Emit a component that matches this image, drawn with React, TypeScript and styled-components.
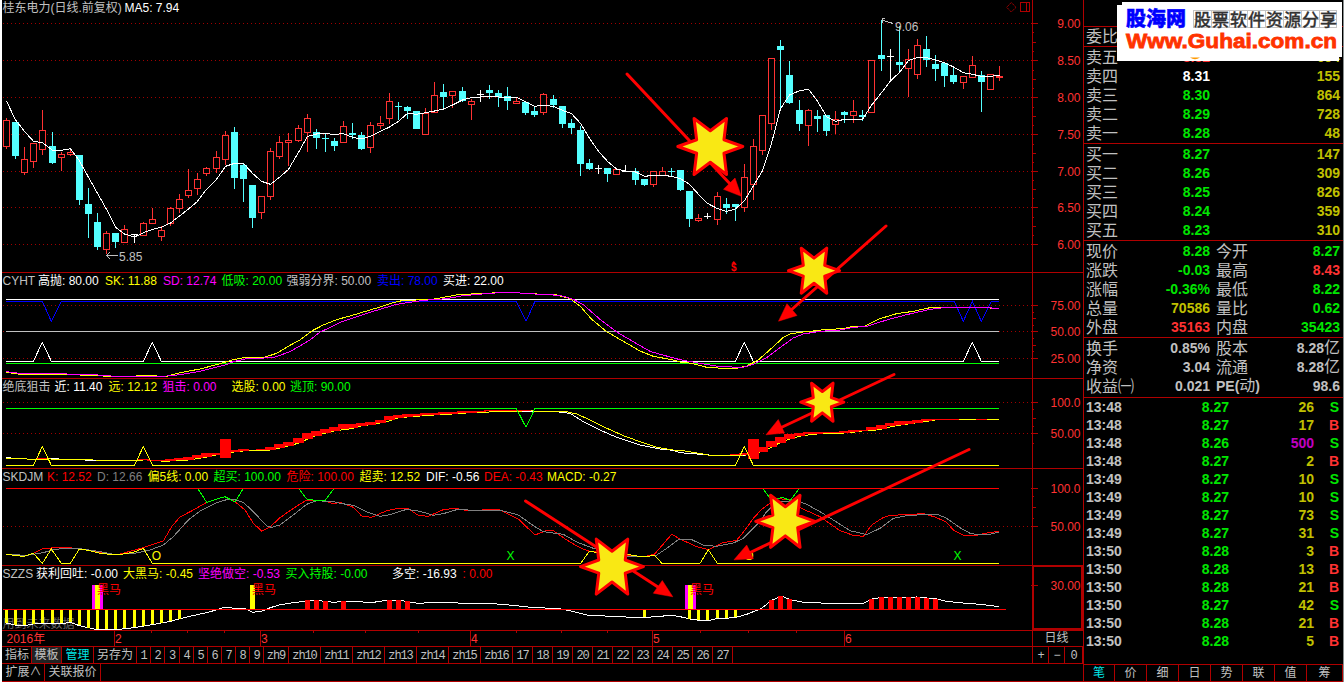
import React from 'react';
import styled, { createGlobalStyle } from 'styled-components';

const RED = '#b00000';
const UP = '#ff3232';
const DOWN = '#54ffff';
const GRAY = '#c0c0c0';
const GREEN = '#00e600';
const OLIVE = '#c0c000';
const SANS = '"Liberation Sans", "Noto Sans CJK SC", sans-serif';

const Global = createGlobalStyle`
  * { box-sizing: border-box; }
  body { margin: 0; background: #fff; font-family: ${SANS}; font-size: 12px; }
`;

const Screen = styled.div`
  position: relative;
  width: 1344px;
  height: 684px;
  display: flex;
  align-items: flex-start;
  padding-left: 2px;
  background: #fff;
  overflow: hidden;
`;

const ChartArea = styled.div`
  width: 1081px;
  height: 682px;
  display: flex;
  flex-direction: column;
  background: #000;
`;

const Panel = styled.section<{ $h: number; $first?: boolean }>`
  height: ${p => p.$h}px;
  flex: none;
  border-top: ${p => (p.$first ? 0 : 1)}px solid ${RED};
  position: relative;
`;

const Legend = styled.div`
  position: absolute;
  left: 0;
  top: 1px;
  height: 15px;
  display: flex;
  align-items: center;
  padding-left: 0.5px;
  line-height: 15px;
  white-space: pre;
  z-index: 1;
`;

const LegendItem = styled.span<{ $w: number; $c: string }>`
  width: ${p => p.$w}px;
  flex: none;
  color: ${p => p.$c};
`;

const Plot = styled.svg`
  display: block;
  font-family: ${SANS};
  font-size: 12px;
`;

const DateRow = styled.div`
  height: 16px;
  flex: none;
  border-top: 1px solid ${RED};
  display: flex;
`;

const PeriodCell = styled.div`
  width: 51px;
  border-left: 1px solid ${RED};
  color: ${GRAY};
  text-align: center;
  line-height: 15px;
  padding-right: 3px;
`;

const Toolbar = styled.div<{ $h: number; $last?: boolean }>`
  height: ${p => p.$h}px;
  flex: none;
  display: flex;
  border-top: 1px solid ${RED};
  border-bottom: ${p => (p.$last ? 1 : 0)}px solid ${RED};
  padding-left: 1px;
`;

const ToolCell = styled.div<{ $w: number; $active?: boolean; $pressed?: boolean; $mono?: boolean }>`
  width: ${p => p.$w}px;
  flex: none;
  border-right: 1px solid ${RED};
  color: ${p => (p.$active ? '#00e6e6' : GRAY)};
  background: ${p => (p.$pressed ? '#222' : 'transparent')};
  font-family: ${p => (p.$mono ? '"Liberation Mono", monospace' : SANS)};
  font-size: 12px;
  letter-spacing: ${p => (p.$mono ? -1.1 : 0)}px;
  line-height: ${p => (p.$mono ? 18 : 16)}px;
  text-align: center;
  white-space: nowrap;
`;

const ToolSpacer = styled.div`
  flex: 1;
  border-right: 1px solid ${RED};
`;

const QuotePanel = styled.aside`
  width: 261px;
  height: 682px;
  display: flex;
  flex-direction: column;
  background: #000;
  border-left: 1px solid ${RED};
  border-right: 1px solid #8a9090;
`;

const QuoteBlock = styled.div<{ $h: number; $pad?: number; $plain?: boolean }>`
  height: ${p => p.$h}px;
  flex: none;
  padding-top: ${p => p.$pad ?? 1}px;
  border-top: ${p => (p.$plain ? 0 : 1)}px solid ${RED};
`;

const BookRow = styled.div`
  height: 19px;
  display: grid;
  grid-template-columns: 48px 76px 6px 40px 1fr;
  padding: 0 3px 0 2px;
  align-items: center;
  line-height: 19px;
  color: ${GRAY};
  white-space: nowrap;
`;

const Name = styled.span`
  font-size: 16px;
`;

const Num = styled.span<{ $c: string; $col?: number; $left?: boolean }>`
  font-size: 14px;
  font-weight: bold;
  text-align: ${p => (p.$left ? 'left' : 'right')};
  color: ${p => p.$c};
  ${p => (p.$col ? `grid-column: ${p.$col};` : '')}
  small { font-size: 16px; font-weight: normal; }
`;

const Trades = styled.div`
  flex: 1;
  border-top: 1px solid ${RED};
`;

const TradeRow = styled.div`
  height: 18px;
  display: grid;
  grid-template-columns: 70px 73px 85px 1fr;
  padding: 0 4px 0 2px;
  line-height: 18px;
`;

const Tabs = styled.div`
  height: 18px;
  flex: none;
  display: flex;
  border-top: 1px solid ${RED};
  border-bottom: 1px solid ${RED};
`;

const Tab = styled.div<{ $w: number; $active?: boolean }>`
  width: ${p => p.$w}px;
  border-right: 1px solid ${RED};
  color: ${p => (p.$active ? '#00e6e6' : GRAY)};
  text-align: center;
  line-height: 16px;
`;

const Overlay = styled.svg`
  position: absolute;
  left: 0;
  top: 0;
  z-index: 3;
  pointer-events: none;
`;

/* ---------- geometry ---------- */

const X = (i: number) => 6 + Math.round(i * 9.11);

// Series are digitised in thirds of a pixel, in sections that begin at x = 0, 340 and 680.
const trace = (oy: number, ...sections: string[]) =>
  sections
    .map((s, k) =>
      s.trim() === '' ? '' : s.trim().split(/\s+/).map(p => {
        const [x, y] = p.split(',').map(Number);
        return `${(k * 340 + x / 3).toFixed(2)},${(oy + y / 3).toFixed(2)}`;
      }).join(' '))
    .join(' ');

const Line = ({ pts, c }: { pts: string; c: string }) => (
  <polyline points={pts} fill="none" stroke={c} strokeWidth={1} shapeRendering="crispEdges" />
);

const HLine = ({ y, c, from = 6, to = 999 }: { y: number; c: string; from?: number; to?: number }) => (
  <rect x={from} y={y} width={to - from} height={1} fill={c} />
);

const Grid = ({ ys }: { ys: number[] }) => (
  <g stroke="#a00000" strokeDasharray="1 3" shapeRendering="crispEdges">
    {ys.map(y => <line key={y} x1={3} x2={1032} y1={y + 0.5} y2={y + 0.5} />)}
  </g>
);

const Axis = ({ top, h, ticks, minor = [] }: { top: number; h: number; ticks: [number, string][]; minor?: number[] }) => (
  <g>
    <rect x={1032} y={top} width={1} height={h} fill={RED} />
    {minor.map((y, i) => <rect key={y} x={1033} y={y} width={i % 3 === 1 ? 3 : 1} height={1} fill={RED} />)}
    {ticks.map(([y, t]) => (
      <g key={t}>
        <rect x={1031} y={y} width={7} height={1} fill={RED} />
        <text x={1080.5} y={y + 5} textAnchor="end" fill={UP}>{t}</text>
      </g>
    ))}
  </g>
);

/* ---------- price panel data: kind, high, body top, body bottom, low ---------- */

const candles = `u354,361,440,447 d366,366,470,479 u441,478,518,525 u430,430,485,504 u330,391,449,467 d396,438,489,492
u456,463,472,513 u450,457,464,470 d465,465,600,615 d564,612,642,714 d639,666,741,750 u693,700,748,764 d699,699,726,744
u675,688,727,729 w703,703,703,731 u666,670,706,708 u624,658,671,671 u679,691,710,723 u621,625,671,680 u582,598,626,639
u507,571,587,594 u519,538,566,587 u501,505,521,530 u453,472,506,521 u393,406,479,497 d381,396,534,567 d489,495,537,606
d555,555,654,684 u588,589,638,657 u444,454,590,602 u408,427,470,479 u399,421,428,498 u375,385,422,426 u342,355,398,456
d387,396,414,447 d402,414,416,456 d414,423,438,453 u363,379,428,428 d369,399,405,419 d396,405,447,450 u366,376,443,459
u348,370,377,387 u279,304,356,372 d306,318,320,360 d318,321,333,357 d333,333,387,387 u324,340,404,404 u246,286,338,338
d252,276,291,330 u273,274,287,324 d261,273,303,306 u297,304,314,360 w270,283,283,308 d255,270,279,297 d270,279,293,321
d261,288,303,330 u294,304,311,312 d303,306,339,345 d321,333,345,351 u279,283,338,345 d285,297,315,326 d318,318,372,384
d357,369,384,402 d378,390,492,528 d477,489,507,510 w495,506,506,522 d504,504,522,546 u507,508,524,524 w495,513,513,515
d504,513,540,555 d537,537,555,558 u513,514,554,561 u501,514,525,530 d504,514,516,530 d510,510,570,573 d573,573,657,681
u642,655,662,666 w639,650,650,658 u576,589,659,675 d594,612,624,644 d612,612,621,663 u492,532,623,636 u417,439,553,600
u346,346,452,465 u175,175,371,390 d120,138,150,325 d183,225,309,312 d300,330,372,393 u327,331,377,438 d330,348,357,396
d345,345,393,408 u333,358,374,403 d333,336,345,369 u300,334,347,369 d330,345,351,363 u181,181,338,338 d60,165,177,213
w147,169,169,245 d78,186,195,219 u147,178,206,291 u117,136,224,237 d108,147,180,201 d165,192,207,243 d189,189,228,261
d198,225,246,252 u229,229,248,267 u168,196,233,235 d213,225,246,336 u223,223,269,269 u198,229,231,243`
  .split(/\s+/)
  .map(s => ({ kind: s[0], v: s.slice(1).split(',').map(n => Math.floor(Number(n) / 3)) }));

const ma5 = [303, 360, 394, 424, 428, 451, 451, 446, 483, 532, 580, 628, 682, 702, 711, 698, 688, 682, 669, 648, 627, 604,
  568, 538, 499, 490, 490, 520, 544, 553, 532, 508, 457, 409, 402, 401, 403, 401, 412, 417, 409, 394, 381, 364, 340, 343,
  338, 333, 327, 315, 300, 293, 291, 290, 291, 292, 292, 305, 319, 316, 319, 331, 341, 370, 415, 454, 484, 507, 513, 516,
  529, 526, 526, 529, 536, 553, 583, 610, 626, 634, 627, 602, 557, 512, 430, 326, 285, 272, 268, 303, 350, 364, 358, 358,
  358, 316, 278, 243, 217, 182, 172, 173, 180, 188, 201, 218, 223, 229, 229, 226];

const Candle = ({ i, kind, v }: { i: number; kind: string; v: number[] }) => {
  const x = X(i);
  const [hi, top, bot, lo] = v;
  if (kind === 'u') {
    const h = Math.max(bot - top, 1);
    return (
      <g>
        <rect x={x} y={hi} width={1} height={Math.max(top - hi, 0)} fill={UP} />
        <rect x={x} y={bot} width={1} height={Math.max(lo - bot, 0)} fill={UP} />
        <rect x={x - 2.5} y={top + 0.5} width={6} height={h} fill="#000" stroke={UP} />
      </g>
    );
  }
  const c = kind === 'd' ? DOWN : '#fff';
  return (
    <g fill={c}>
      <rect x={x} y={hi} width={1} height={Math.max(lo - hi, 1)} />
      <rect x={x - 3} y={top} width={7} height={Math.max(bot - top, 1)} />
    </g>
  );
};

const PricePlot = () => (
  <Plot width={1081} height={272} viewBox="2 0 1081 272">
    <Grid ys={[23, 60, 97, 134, 171, 207, 244]} />
    {candles.map((c, i) => <Candle key={i} i={i} kind={c.kind} v={c.v} />)}
    <Line c="#fff" pts={ma5.map((y, i) => `${X(i) + 0.5},${y / 3}`).join(' ')} />
    <g fill="none" stroke={GRAY} shapeRendering="crispEdges">
      <path d="M106.5 255.5H118M110 252L106.500 255.500L110 259" />
      <path d="M882 20L893 23.500M885 18.500H882V22.500" />
    </g>
    <text x={119} y={261} fill={GRAY}>5.85</text>
    <text x={895} y={31} fill={GRAY}>9.06</text>
    <text x={733.8} y={271} textAnchor="middle" fontSize={10} fontWeight="bold" fill="#f00">$</text>
    <path d="M731.500 263.500L733.800 261L736 263.500Z" fill="#f00" />
    <g fill="none" stroke={RED}>
      <path d="M1011.300 2.500L1016 7.300L1011.300 12L1006.700 7.300Z" strokeDasharray="1.500 .7" />
      <path d="M1020.500 2.500H1029.500V11.500H1020.500ZM1026.500 2.500V11.500" shapeRendering="crispEdges" />
    </g>
    <Axis
      top={0}
      h={272}
      minor={[32, 42, 51, 70, 79, 88, 107, 116, 125, 144, 153, 162, 180, 189, 198, 217, 226, 235]}
      ticks={[[23, '9.00'], [60, '8.50'], [97, '8.00'], [134, '7.50'], [171, '7.00'], [207, '6.50'], [244, '6.00']]}
    />
  </Plot>
);

const CyhtPlot = () => (
  <Plot width={1081} height={105} viewBox="2 273 1081 105">
    <Grid ys={[305, 331, 358]} />
    <Line c="#00f" pts={trace(270, '18,94 127,94 154,154 184,94 1020,94', '529,94 558,154 585,94 1020,94', '823,94 850,154 877,94 904,154 934,94 958,94')} />
    <HLine y={299} c="#fff" />
    <HLine y={331} c={GRAY} />
    <HLine y={363} c="#0f0" />
    <Line c="#fff" pts={trace(270, '18,274 100,274 127,217 154,274 430,274 457,217 484,274', '', '166,274 193,217 220,274 850,274 877,217 904,274 958,274')} />
    <Line c="#ff0" pts={trace(270,
      '18,307 60,313 110,314 180,313 270,316 350,320 440,317 500,319 540,308 600,297 660,281 700,269 730,263 790,263 830,250 870,226 900,210 935,183 970,165 1010,149',
      '0,146 30,138 70,126 110,114 160,98 190,91 270,89 300,84 360,73 430,71 480,67 540,69 590,72 650,75 690,86 720,108 755,148 800,185 850,214 900,243 940,259 1000,270',
      '0,276 35,280 80,292 130,295 170,295 200,288 235,270 280,230 310,202 330,192 360,187 400,183 430,179 490,176 520,169 555,168 600,146 650,131 700,124 750,113 800,112 910,112 940,115 958,115')} />
    <Line c="#f0f" pts={trace(270,
      '18,305 60,310 160,311 280,314 360,320 500,318 540,314 600,304 680,284 700,275 740,266 820,263 870,245 930,210 960,186 1000,168',
      '0,157 100,124 170,103 250,91 320,86 370,77 450,70 500,67 540,69 600,73 660,76 700,88 730,104 780,148 830,186 880,215 930,244 990,261',
      '0,269 60,280 120,290 190,292 220,283 260,263 300,233 340,204 370,192 420,184 480,180 520,172 560,169 620,150 680,134 750,118 790,113 910,113 958,115')} />
    <Axis top={272} h={106} minor={[312, 318, 325, 338, 345, 351]} ticks={[[305, '75.00'], [331, '50.00'], [358, '25.00']]} />
  </Plot>
);

// Red bands of the second indicator: candle index, top, bottom.
const bands = `4,565,569 15,569,572 16,570,573 17,570,573 18,567,573 19,564,570 20,561,570 21,557,566 22,551,562 23,549,555
24,507,563 25,540,546 26,538,543 28,537,540 29,531,540 30,524,535 31,516,528 32,504,520 33,491,508 34,483,497 35,477,490
36,471,483 37,464,479 38,464,476 39,459,468 40,456,464 41,450,459 42,440,453 43,436,444 44,432,441 45,432,439 46,431,437
47,429,435 48,427,433 49,426,432 50,425,430 51,423,428 52,423,426 53,422,426 54,420,424 55,420,423 56,420,423 57,420,423
80,552,556 81,551,556 82,507,567 83,531,545 84,514,533 85,501,518 86,492,508 87,490,499 88,488,495 89,486,492 90,486,490
91,486,489 92,483,489 93,480,487 94,480,483 95,473,482 96,465,478 97,461,471 98,455,466 99,453,462 100,450,458 101,448,454
102,447,451 103,447,450 104,447,450 107,447,450`
  .split(/\s+/)
  .map(s => s.split(',').map(Number));

const bandEdge = (lo: number, hi: number, side: 1 | 2) =>
  bands
    .filter(b => b[0] >= lo && b[0] <= hi && b[0] !== 24 && b[0] !== 82)
    .map(b => `${X(b[0])},${270 + b[side] / 3}`)
    .join(' ');

const SniperPlot = () => (
  <Plot width={1081} height={89} viewBox="2 379 1081 89">
    <Grid ys={[402, 433]} />
    <Line c="#fff" pts={trace(270, '18,563 60,566 100,568 150,566 280,571 430,571')} />
    <Line c="#ff0" pts={trace(270, '18,565 60,566 100,568 150,567 280,570 430,571')} />
    <Line c="#ff0" pts={bandEdge(17, 57, 2)} />
    <Line c="#ff0" pts={bandEdge(81, 102, 2)} />
    <Line c="#fff" pts={trace(270, '', '545,424 650,425 690,430 730,455 780,480 830,502 900,525 960,537 1000,541', '0,548 100,556 190,556 215,550')} />
    <Line c="#ff0" pts={trace(270, '', '545,421 600,424 680,425 710,432 740,445 790,470 850,497 900,515 950,532 1000,540', '0,541 40,547 90,556 190,556')} />
    <Line c="#ff0" pts={trace(270, '', '', '780,449 958,449')} />
    <g fill="#f00" shapeRendering="crispEdges">
      {bands.map(([i, t, b]) => (
        <rect key={i} x={X(i) - 5} y={Math.floor(270 + t / 3)} width={11} height={Math.max(Math.round((b - t) / 3), 1)} />
      ))}
    </g>
    <Line c="#0f0" pts={trace(270, '18,415 1020,415', '529,415 558,472 585,415', '0,415 958,415')} />
    <Line c="#ff0" pts={trace(270, '18,586 100,586 127,530 154,586 403,586 430,530 458,586', '', '166,586 193,530 220,586 958,586')} />
    <Axis top={378} h={90} minor={[409, 418, 426, 443]} ticks={[[402, '100.0'], [433, '50.00']]} />
  </Plot>
);

const SkdjPlot = () => (
  <Plot width={1081} height={96} viewBox="2 469 1081 96">
    <Grid ys={[526]} />
    <HLine y={488} c="#f00" />
    <Line c="#f00" pts={trace(465,
      '18,268 80,272 100,265 130,250 200,247 240,252 300,262 350,270 430,248 490,228 515,185 540,156 580,135 620,112 650,102 675,95 705,110 735,135 760,175 785,198 810,186 840,158 880,130 920,105 975,107 1000,117',
      '0,112 40,127 65,153 95,157 140,137 170,131 205,131 235,151 265,154 310,134 345,130 390,138 440,134 480,135 535,162 585,210 620,196 640,197 680,225 720,248 748,259 910,276 943,268 995,208',
      '0,222 50,245 85,254 125,234 170,226 195,195 220,160 245,133 290,100 330,105 360,128 420,155 480,197 520,211 550,214 575,180 605,160 630,151 700,148 730,145 770,158 800,172 820,195 850,211 890,211 920,204 958,199')} />
    <Line c="#808080" pts={trace(465,
      '18,268 80,271 130,263 160,254 200,249 240,251 300,260 340,268 400,266 450,255 490,240 520,215 565,165 600,138 650,113 680,104 705,104 730,112 760,140 800,183 815,187 840,180 880,150 920,118 950,107 1000,110',
      '0,115 40,121 80,141 120,154 150,149 200,133 240,139 280,151 310,146 350,134 450,137 490,138 535,150 580,182 610,200 670,208 710,231 760,250 860,275 910,276 950,270 980,250 1015,224',
      '0,222 35,224 70,240 110,244 160,234 190,220 215,195 235,175 260,140 290,112 320,108 360,110 380,118 420,140 460,165 510,197 560,209 600,190 640,160 680,152 740,148 775,149 800,160 840,188 870,205 900,210 930,208 958,201')} />
    <Line c="#ff0" pts={trace(465,
      '18,268 60,273 75,273 100,265 127,295 154,252 184,295 211,295 238,252 270,257 300,265 350,270 400,262 430,250 457,295',
      '722,295 748,259 770,262 860,268 910,276 943,271 966,295',
      '60,295 85,254 112,295 958,295')} />
    <Line c="#0f0" pts={trace(465, '595,73 620,112 650,102 675,95 705,111 728,73')} />
    <Line c="#0f0" pts={trace(465, '898,73 922,104 975,107 1000,73')} />
    <Line c="#0f0" pts={trace(465, '', '', '250,73 277,108 305,97 331,106 356,73')} />
    <text x={156.5} y={560} textAnchor="middle" fill="#ff0">O</text>
    <text x={749} y={560} textAnchor="middle" fill="#ff0">O</text>
    <text x={510.5} y={560} textAnchor="middle" fill="#0f0">X</text>
    <text x={957.5} y={560} textAnchor="middle" fill="#0f0">X</text>
    <Axis top={468} h={97} minor={[496, 507, 518]} ticks={[[488, '100.0'], [526, '50.00']]} />
  </Plot>
);

const shortBars: [number, number][] = [[0, 474], [1, 480], [2, 482], [3, 477], [4, 476], [5, 476], [6, 476], [7, 472],
  [8, 482], [9, 489], [10, 494], [11, 494], [12, 494], [13, 491], [14, 488], [15, 483], [16, 479], [17, 476], [18, 470],
  [19, 464], [70, 458], [75, 464], [76, 467], [77, 467], [78, 461], [79, 461], [80, 458]];
const longBars: [number, number][] = [[33, 406], [34, 406], [35, 408], [37, 408], [42, 406], [43, 406], [44, 408],
  [84, 405], [85, 394], [86, 403], [95, 402], [96, 397], [97, 397], [98, 397], [99, 397], [100, 397], [101, 399], [102, 402]];
const spikes: { x: number; wide: boolean }[] = [{ x: 92, wide: true }, { x: 250, wide: false }, { x: 685, wide: true }];

const SzzsPlot = () => (
  <Plot width={1081} height={64} viewBox="2 566 1081 64">
    <text x={2.5} y={628} fill="#666">用到未来数据</text>
    <Line c="#fff" pts={trace(465,
      '19,474 46,480 73,482 100,477 184,476 211,472 238,482 292,494 346,494 403,488 457,479 511,469 538,462 565,455 619,443 649,435 676,426 703,430 735,430 757,442 784,439 811,428 838,420 865,415 922,408 949,406 1003,412',
      '10,409 100,412 140,406 180,406 235,415 300,411 370,415 460,416 520,421 580,428 650,430 690,437 740,450 830,455 910,458 995,451',
      '0,455 30,462 60,466 90,466 110,461 165,458 200,448 245,430 275,406 304,393 331,404 370,412 450,415 550,415 577,402 604,397 712,396 770,402 800,409 850,414 900,418 958,425')} />
    {shortBars.map(([i, y]) => (
      <rect key={i} x={X(i) - 1} y={609} width={3} height={Math.round((y - 433) / 3)} fill="#ff0" />
    ))}
    {longBars.map(([i, y]) => {
      const top = Math.floor(465 + y / 3);
      return <rect key={i} x={X(i) - 2} y={top} width={5} height={609 - top} fill="#f00" />;
    })}
    {spikes.map(s => (
      <g key={s.x}>
        {s.wide && <rect x={s.x} y={585} width={11} height={25} fill="#f0f" />}
        <rect x={s.wide ? s.x + 3 : s.x} y={585} width={5} height={25} fill="#ff0" />
      </g>
    ))}
    <HLine y={609} c="#f00" from={3} to={1006} />
    <g fill="#f00">
      <text x={97} y={594}>黑马</text>
      <text x={252} y={594}>黑马</text>
      <text x={690} y={594}>黑马</text>
    </g>
    <rect x={1033} y={566} width={49} height={63} fill="none" stroke={RED} strokeWidth={2} />
    <Axis top={565} h={65} ticks={[[585, '30.00']]} />
  </Plot>
);

/* ---------- legends and toolbars ---------- */

type Item = [string, number, string];
const legends: Record<string, Item[]> = {
  price: [['桂东电力(日线.前复权)', 122, GRAY], ['MA5: 7.94', 60, '#fff']],
  cyht: [['CYHT', 35.5, GRAY], ['高抛: 80.00', 67, '#fff'], ['SK: 11.88', 58, '#ff0'], ['SD: 12.74', 58.5, '#f0f'],
    ['低吸: 20.00', 65, '#0f0'], ['强弱分界: 50.00', 90.5, GRAY], ['卖出: 78.00', 66, '#00f'], ['买进: 22.00', 70, '#fff']],
  sniper: [['绝底狙击', 52, GRAY], ['近: 11.40', 54, '#fff'], ['远: 12.12', 54, '#ff0'], ['狙击: 0.00', 69, '#f0f'],
    ['选股: 0.00', 58.5, '#ff0'], ['逃顶: 90.00', 70, '#0f0']],
  skdj: [['SKDJM', 44.5, GRAY], ['K: 12.52', 50, '#f00'], ['D: 12.66', 50.5, '#808080'], ['偏5线: 0.00', 66, '#ff0'],
    ['超买: 100.00', 73, '#0f0'], ['危险: 100.00', 73, '#f00'], ['超卖: 12.52', 66.5, '#ff0'], ['DIF: -0.56', 58, '#fff'],
    ['DEA: -0.43', 63, '#f00'], ['MACD: -0.27', 80, '#ff0']],
  szzs: [['SZZS', 33.5, GRAY], ['获利回吐: -0.00', 87, '#fff'], ['大黑马: -0.45', 75, '#ff0'], ['坚绝做空: -0.53', 87.5, '#f0f'],
    ['买入持股: -0.00', 106.5, '#0f0'], ['多空: -16.93', 70.5, '#fff'], [': 0.00', 40, '#f00']],
};

const LegendBar = ({ items }: { items: Item[] }) => (
  <Legend>
    {items.map(([t, w, c]) => <LegendItem key={t} $w={w} $c={c}>{t}</LegendItem>)}
  </Legend>
);

const months: [number, string][] = [[114, '2'], [260, '3'], [470, '4'], [652, '5'], [844, '6']];
const weeks = [151, 187, 224, 313, 365, 418, 516, 561, 607, 700, 748, 796];

const presets: [string, number][] = [
  ['1', 14], ['2', 14], ['3', 15], ['4', 14], ['5', 14], ['6', 14], ['7', 14], ['8', 14], ['9', 14],
  ['zh9', 25], ['zh10', 32], ['zh11', 32], ['zh12', 32], ['zh13', 32], ['zh14', 32], ['zh15', 32], ['zb16', 32],
  ['17', 20], ['18', 20], ['19', 20], ['20', 20], ['21', 20], ['22', 20], ['23', 20], ['24', 20], ['25', 20], ['26', 20], ['27', 20],
];

/* ---------- quote data ---------- */

const sells = [['卖五', '8.32', '694'], ['卖四', '8.31', '155'], ['卖三', '8.30', '864'], ['卖二', '8.29', '728'], ['卖一', '8.28', '48']];
const buys = [['买一', '8.27', '147'], ['买二', '8.26', '309'], ['买三', '8.25', '826'], ['买四', '8.24', '359'], ['买五', '8.23', '310']];
const sellColor = (p: string) => (p === '8.32' ? UP : p === '8.31' ? '#fff' : GREEN);

const stats: string[][] = [
  ['现价', '8.28', GREEN, '今开', '8.27', GREEN],
  ['涨跌', '-0.03', GREEN, '最高', '8.43', UP],
  ['涨幅', '-0.36%', GREEN, '最低', '8.22', GREEN],
  ['总量', '70586', OLIVE, '量比', '0.62', GREEN],
  ['外盘', '35163', UP, '内盘', '35423', GREEN],
];

const trades = [
  ['13:48', '8.27', '26', 'S'], ['13:48', '8.27', '17', 'B'], ['13:48', '8.26', '500', 'S'], ['13:48', '8.27', '2', 'B'],
  ['13:49', '8.27', '10', 'S'], ['13:49', '8.27', '10', 'S'], ['13:49', '8.27', '73', 'S'], ['13:49', '8.27', '31', 'S'],
  ['13:50', '8.28', '3', 'B'], ['13:50', '8.28', '13', 'B'], ['13:50', '8.28', '21', 'B'], ['13:50', '8.27', '42', 'S'],
  ['13:50', '8.28', '21', 'B'], ['13:50', '8.28', '5', 'B'],
];

const tabs: [string, number][] = [['笔', 31], ['价', 32], ['细', 32], ['日', 32], ['势', 32], ['联', 32], ['值', 32], ['筹', 36]];

/* ---------- annotations ---------- */

const starShape = [[1, 0], [0.42, 0.24], [0.5, 1], [0, 0.56], [-0.5, 1], [-0.42, 0.24], [-1, 0], [-0.42, -0.24], [-0.5, -1], [0, -0.56], [0.5, -1], [0.42, -0.24]];
const stars = [[710.3, 146.5, 32.5, 28], [814, 270.7, 25.5, 22.5], [822.3, 402.2, 21.5, 19], [785.3, 521.3, 29.5, 26], [612, 566.6, 31.5, 27.5]];
const arrows = [
  { from: [627, 74], to: [732, 186], head: '741.3,196.3 723.5,189.3 735,178' },
  { from: [886, 226], to: [790, 311], head: '778.5,321.2 787,303.7 797,315.5' },
  { from: [894, 374.5], to: [778, 429], head: '766,434.8 778.3,419.5 784.5,433' },
  { from: [969, 449.5], to: [747, 554], head: '734,559.8 746.7,545 753.4,558.7' },
  { from: [525.5, 501], to: [661, 589], head: '672.8,596.8 662.3,580.5 653.3,593.2' },
];

const Annotations = () => (
  <Overlay width={1344} height={684} viewBox="0 0 1344 684">
    {arrows.map(a => (
      <g key={a.head} fill="#f00" stroke="#f00">
        <line x1={a.from[0]} y1={a.from[1]} x2={a.to[0]} y2={a.to[1]} strokeWidth={3} strokeLinecap="round" />
        <polygon points={a.head} strokeWidth={0.5} />
      </g>
    ))}
    {stars.map(([cx, cy, w, h]) => (
      <polygon
        key={cx}
        points={starShape.map(([x, y]) => `${cx + x * w},${cy + y * h}`).join(' ')}
        fill="#f9e814"
        stroke="#f00"
        strokeWidth={3}
        strokeLinejoin="round"
      />
    ))}
  </Overlay>
);

const SiteLogo = () => (
  <Overlay width={1344} height={70} viewBox="0 0 1344 70">
    <rect x={1122} y={2} width={220} height={55} fill="#fff" />
    <rect x={1117} y={5} width={222} height={56} fill="#fff" />
    <path d="M1190 57.500H1200Q1195 61 1190 57.500Z" fill="#f90" />
    <text x={1126} y={26} fontFamily='"Noto Sans CJK SC", sans-serif' fontWeight={900} fontSize={20} textLength={60} fill="#00f" stroke="#00f" strokeWidth={0.5}>股海网</text>
    <g stroke="#c4c4c4" fill="none" shapeRendering="crispEdges">
      <rect x={1193.5} y={10.5} width={143} height={17} />
      {[1, 2, 3, 4, 5, 6, 7].map(n => <line key={n} x1={1193.5 + n * 18} x2={1193.5 + n * 18} y1={10} y2={28} />)}
      <line x1={1193} x2={1337} y1={19.5} y2={19.5} />
    </g>
    <text x={1194} y={25.5} fontFamily='"Noto Sans CJK SC", sans-serif' fontWeight={500} fontSize={17} textLength={143} fill="#333" stroke="#333" strokeWidth={0.3}>股票软件资源分享</text>
    <text x={1126} y={48.3} fontFamily='"Liberation Sans", sans-serif' fontWeight={700} fontSize={20.5} textLength={211} lengthAdjust="spacingAndGlyphs" fill="#ff3300" stroke="#ff3300" strokeWidth={0.8}>Www.Guhai.com.cn</text>
  </Overlay>
);

export default function App() {
  return (
    <Screen>
      <Global />
      <ChartArea>
        <Panel $h={272} $first><LegendBar items={legends.price} /><PricePlot /></Panel>
        <Panel $h={106}><LegendBar items={legends.cyht} /><CyhtPlot /></Panel>
        <Panel $h={90}><LegendBar items={legends.sniper} /><SniperPlot /></Panel>
        <Panel $h={97}><LegendBar items={legends.skdj} /><SkdjPlot /></Panel>
        <Panel $h={65}><LegendBar items={legends.szzs} /><SzzsPlot /></Panel>
        <DateRow>
          <Plot width={1030} height={15} viewBox="2 631 1030 15">
            <text x={6.5} y={643} fill={UP}>2016年</text>
            {months.map(([x, t]) => (
              <g key={t}>
                <rect x={x} y={631} width={1} height={15} fill={RED} />
                <text x={x + 1} y={643} fill={UP}>{t}</text>
              </g>
            ))}
            {weeks.map(x => <rect key={x} x={x} y={631} width={1} height={2} fill={RED} />)}
          </Plot>
          <PeriodCell>日线</PeriodCell>
        </DateRow>
        <Toolbar $h={17}>
          <ToolCell $w={29}>指标</ToolCell>
          <ToolCell $w={30} $pressed>模板</ToolCell>
          <ToolCell $w={32} $active>管理</ToolCell>
          <ToolCell $w={43}>另存为</ToolCell>
          {presets.map(([t, w]) => <ToolCell key={t} $w={w} $mono>{t}</ToolCell>)}
          <ToolSpacer />
          <ToolCell $w={16} $mono>+</ToolCell>
          <ToolCell $w={16} $mono>−</ToolCell>
          <ToolCell $w={18} $mono>0</ToolCell>
        </Toolbar>
        <Toolbar $h={19} $last>
          <ToolCell $w={42}>扩展∧</ToolCell>
          <ToolCell $w={56}>关联报价</ToolCell>
        </Toolbar>
      </ChartArea>

      <QuotePanel>
        <QuoteBlock $h={26} $plain />
        <QuoteBlock $h={20} $pad={0}><BookRow><Name>委比</Name></BookRow></QuoteBlock>
        <QuoteBlock $h={97}>
          {sells.map(([n, p, q]) => (
            <BookRow key={n}><Name>{n}</Name><Num $c={sellColor(p)}>{p}</Num><Num $c={OLIVE} $col={5}>{q}</Num></BookRow>
          ))}
        </QuoteBlock>
        <QuoteBlock $h={97}>
          {buys.map(([n, p, q]) => (
            <BookRow key={n}><Name>{n}</Name><Num $c={GREEN}>{p}</Num><Num $c={OLIVE} $col={5}>{q}</Num></BookRow>
          ))}
        </QuoteBlock>
        <QuoteBlock $h={97}>
          {stats.map(([a, v, c, b, w, d]) => (
            <BookRow key={a}><Name>{a}</Name><Num $c={c}>{v}</Num><i /><Name>{b}</Name><Num $c={d}>{w}</Num></BookRow>
          ))}
        </QuoteBlock>
        <QuoteBlock $h={60} $pad={0}>
          <BookRow><Name>换手</Name><Num $c={GRAY}>0.85%</Num><i /><Name>股本</Name><Num $c={GRAY}>8.28<small>亿</small></Num></BookRow>
          <BookRow><Name>净资</Name><Num $c={GRAY}>3.04</Num><i /><Name>流通</Name><Num $c={GRAY}>8.28<small>亿</small></Num></BookRow>
          <BookRow><Name>收益㈠</Name><Num $c={GRAY}>0.021</Num><i /><Num $c={GRAY} $left>PE(<small>动</small>)</Num><Num $c={GRAY}>98.6</Num></BookRow>
        </QuoteBlock>
        <Trades>
          {trades.map(([t, p, q, f], i) => (
            <TradeRow key={i}>
              <Num $c={GRAY} $left>{t}</Num>
              <Num $c={GREEN}>{p}</Num>
              <Num $c={q === '500' ? '#c000c0' : OLIVE}>{q}</Num>
              <Num $c={f === 'S' ? GREEN : UP}>{f}</Num>
            </TradeRow>
          ))}
        </Trades>
        <Tabs>
          {tabs.map(([t, w], i) => <Tab key={t} $w={w} $active={i === 0}>{t}</Tab>)}
        </Tabs>
      </QuotePanel>
      <Annotations />
      <SiteLogo />
    </Screen>
  );
}
